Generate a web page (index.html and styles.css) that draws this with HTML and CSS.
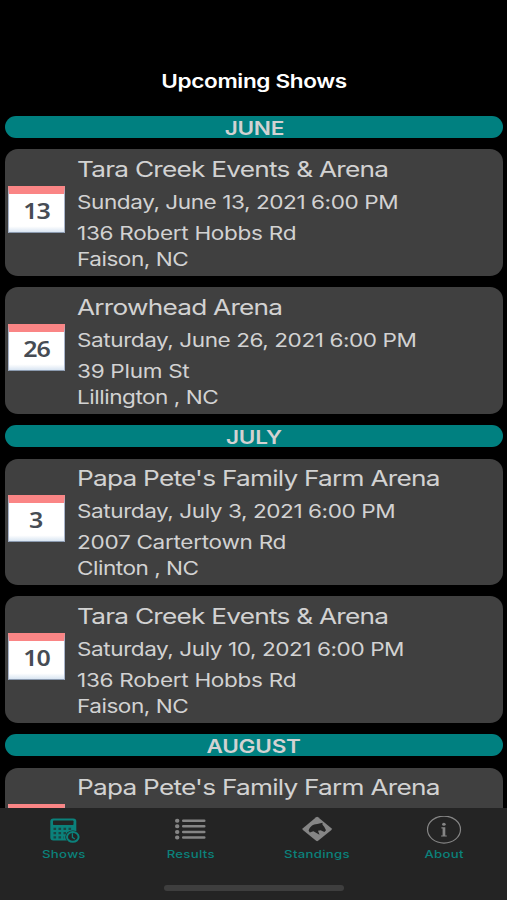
FILE: index.html
```html
<!DOCTYPE html>
<html lang="en">
<head>
<meta charset="utf-8">
<title>Upcoming Shows</title>
<link rel="stylesheet" href="styles.css">
</head>
<body>
<div class="app">
  <header class="header"><h1 class="wide">Upcoming Shows</h1></header>
  <main class="list">
    <h2 class="month"><span class="wide">JUNE</span></h2>
    <article class="card">
      <div class="calendar"><span class="wide">13</span></div>
      <div class="info">
        <h3 class="wide">Tara Creek Events &amp; Arena</h3>
        <p class="wide date">Sunday, June 13, 2021 6:00 PM</p>
        <p class="wide street">136 Robert Hobbs Rd</p>
        <p class="wide city">Faison, NC</p>
      </div>
    </article>
    <article class="card">
      <div class="calendar"><span class="wide">26</span></div>
      <div class="info">
        <h3 class="wide">Arrowhead Arena</h3>
        <p class="wide date">Saturday, June 26, 2021 6:00 PM</p>
        <p class="wide street">39 Plum St</p>
        <p class="wide city">Lillington , NC</p>
      </div>
    </article>
    <h2 class="month"><span class="wide">JULY</span></h2>
    <article class="card">
      <div class="calendar"><span class="wide">3</span></div>
      <div class="info">
        <h3 class="wide">Papa Pete's Family Farm Arena</h3>
        <p class="wide date">Saturday, July 3, 2021 6:00 PM</p>
        <p class="wide street">2007 Cartertown Rd</p>
        <p class="wide city">Clinton , NC</p>
      </div>
    </article>
    <article class="card">
      <div class="calendar"><span class="wide">10</span></div>
      <div class="info">
        <h3 class="wide">Tara Creek Events &amp; Arena</h3>
        <p class="wide date">Saturday, July 10, 2021 6:00 PM</p>
        <p class="wide street">136 Robert Hobbs Rd</p>
        <p class="wide city">Faison, NC</p>
      </div>
    </article>
    <h2 class="month"><span class="wide">AUGUST</span></h2>
    <article class="card">
      <div class="calendar"></div>
      <div class="info">
        <h3 class="wide">Papa Pete's Family Farm Arena</h3>
      </div>
    </article>
  </main>
  <nav class="tabs">
    <a class="tab active">
      <svg width="32" height="30" viewBox="0 0 32 30">
        <rect x="1.3" y="2.6" width="26" height="22" rx="3" fill="currentColor"/>
        <rect x="4" y="4.6" width="20.5" height="4.4" rx=".7" fill="#242424"/>
        <path d="M4.500 12.800H24M4.500 17.200H17M4.500 21.400H15" stroke="#242424" stroke-width="2.200" stroke-dasharray="2.600 2.400" fill="none" opacity=".65"/>
        <ellipse cx="23.8" cy="20.9" rx="7.500" ry="6.500" fill="#242424"/>
        <ellipse cx="23.8" cy="20.9" rx="5.8" ry="4.9" fill="none" stroke="currentColor" stroke-width="2"/>
        <path d="M23.4 17.300v4l2.400 1.700" fill="none" stroke="currentColor" stroke-width="1.3"/>
      </svg>
      <span class="wide">Shows</span>
    </a>
    <a class="tab">
      <svg width="32" height="30" viewBox="0 0 32 30" fill="none" stroke="currentColor" stroke-linecap="round">
        <path d="M9.200 4.700H30.300M9.200 10.300H30.300M9.200 15.900H30.300M9.200 21.400H30.300" stroke-width="2.500"/>
        <path d="M3 4.700h.4M3 10.300h.4M3 15.900h.4M3 21.400h.4" stroke-width="4"/>
      </svg>
      <span class="wide">Results</span>
    </a>
    <a class="tab">
      <svg width="32" height="30" viewBox="0 0 32 30">
        <path d="M15.100 1.200q1-.8 2 0L30.400 12.200q1 .9 0 1.800L17.100 24.800q-1 .8-2 0L1.900 14q-1-.9 0-1.800Z" fill="currentColor"/>
        <path d="M7.600 14.500C9 10.300 12 8.500 16.300 8.100L21.500 6.800L21.500 8.700L23.200 10.700L25 14.200L23.400 16.100L19.600 14.200L17 14.800L18.500 18.700L12.400 15.300L8.800 16.600Z" fill="#242424"/>
      </svg>
      <span class="wide">Standings</span>
    </a>
    <a class="tab">
      <svg width="36" height="30" viewBox="0 0 36 30">
        <ellipse cx="18" cy="13.600" rx="16.500" ry="13.500" fill="none" stroke="currentColor" stroke-width="1.200"/>
        <ellipse cx="17.900" cy="8.300" rx="1.800" ry="1.500" fill="currentColor"/>
        <path d="M15.400 11.300h3.900v8.200h1.500v1.100h-5.700v-1.100h1.500V12.500h-1.200Z" fill="currentColor"/>
      </svg>
      <span class="wide">About</span>
    </a>
    <div class="home-bar"></div>
  </nav>
</div>
</body>
</html>
```
FILE: styles.css
```css
* { box-sizing: border-box; }
body {
  margin: 0;
  background: #000;
  color: #d2d2d2;
  font-family: Inter, "Liberation Sans", sans-serif;
}
h1, h2, h3, p { margin: 0; }
.app {
  display: flex;
  flex-direction: column;
  height: 900px;
  overflow: hidden;
}
/* Letterforms are drawn wider than the font's normal proportions. */
.wide {
  display: block;
  width: max-content;
  white-space: nowrap;
  transform: scaleX(1.22);
}
.header {
  flex: none;
  height: 116px;
  padding: 69px 0 0 1px;
  display: flex;
  justify-content: center;
}
.header h1 {
  font-size: 18.5px;
  line-height: 24px;
  font-weight: 600;
  letter-spacing: -.3px;
  color: #fff;
}
.list {
  flex: 1;
  min-height: 0;
  overflow: hidden;
  display: flex;
  flex-direction: column;
  gap: 11.2px;
  padding: 0 4px 0 5px;
}
.month {
  flex: none;
  height: 22.3px;
  border-radius: 12px;
  background: #008080;
  display: flex;
  justify-content: center;
  font-size: 18.5px;
  line-height: 24px;
  font-weight: 600;
  letter-spacing: -.2px;
}
.card {
  flex: none;
  height: 126.6px;
  border-radius: 13px;
  background: #404040;
  display: flex;
  padding: 2.5px 0 0 3px;
}
.calendar {
  width: 57px;
  height: 47px;
  margin-top: 34px;
  border: 1px solid #a9b5cb;
  border-top: 8px solid #fa8585;
  border-bottom-color: #8c9bb0;
  background: linear-gradient(#fff 85%, #d9e5f2);
  box-shadow: inset 0 1px #fff;
  color: #464c54;
  display: flex;
  justify-content: center;
  font-family: "Noto Sans", sans-serif;
  font-size: 21.5px;
  line-height: 34px;
  font-weight: 600;
  letter-spacing: -.8px;
}
.calendar .wide { margin-left: -1px; transform: scaleX(1.16); }
.info { margin-left: 11.5px; }
.info .wide { transform-origin: left center; }
.info h3 {
  font-size: 21.5px;
  line-height: 34px;
  font-weight: 400;
  letter-spacing: -.63px;
}
.info p { font-size: 18.5px; }
.info .date { line-height: 33px; letter-spacing: -.36px; }
.info .street { line-height: 29px; letter-spacing: -.25px; }
.info .city { line-height: 23.5px; letter-spacing: -.4px; }
.tabs {
  flex: none;
  position: relative;
  height: 92px;
  padding-top: 8px;
  background: #242424;
  display: grid;
  grid-template-columns: repeat(4, 1fr);
}
.tab {
  display: flex;
  flex-direction: column;
  align-items: center;
  color: #858585;
  font-size: 10.8px;
  line-height: 17px;
  font-weight: 500;
  letter-spacing: .25px;
}
.tab svg { display: block; }
.tab span { margin-left: 1px; }
.tab.active, .tab span { color: #0b817b; }
.tab.active svg { margin-left: 4px; }
.home-bar {
  position: absolute;
  left: 164px;
  bottom: 9px;
  width: 180px;
  height: 6px;
  border-radius: 3px;
  background: #3e3e3e;
}
```
